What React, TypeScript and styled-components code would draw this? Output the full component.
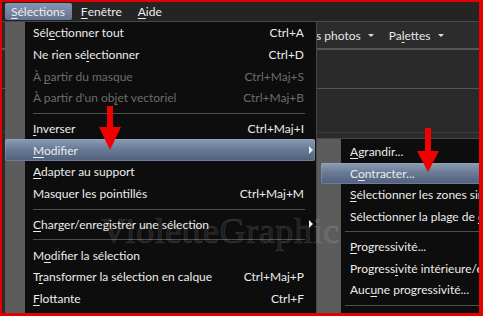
import React from 'react';
import styled, { createGlobalStyle } from 'styled-components';

const Global = createGlobalStyle`
  html, body { margin: 0; padding: 0; background: #000; }
  body { font-family: Lato, "Noto Sans", sans-serif; }
`;

const Frame = styled.div`
  position: relative;
  width: 483px;
  height: 316px;
  box-sizing: border-box;
  border-style: solid;
  border-color: #e40000;
  border-width: 2px 4px 3px 2px;
  overflow: hidden;
  background: #2b2b2b;
  display: flex;
  flex-direction: column;
  font-family: Lato, "Noto Sans", sans-serif;
  font-size: 12px;
  color: #ececec;
`;

const MenuBar = styled.div`
  height: 19px;
  flex-shrink: 0;
  background: #242424;
  display: flex;
  align-items: stretch;
  gap: 3px;
  padding-left: 3px;
`;

const MenuTitle = styled.div<{ $active?: boolean }>`
  display: flex;
  align-items: center;
  margin: 1px 0;
  padding: 0 7px 0 6px;
  border-radius: 2px;
  color: #ededed;
  background: ${(p) => (p.$active ? 'linear-gradient(#8796b0, #63738e)' : 'transparent')};
`;

const Toolbar = styled.div`
  height: 26px;
  flex-shrink: 0;
  background: #2c2c2c;
  border-top: 1px solid #4b4b4b;
  border-bottom: 2px solid #565656;
  display: flex;
  align-items: center;
  gap: 15px;
  padding-left: 314px;
  color: #e6e6e6;
`;

const ToolItem = styled.div`
  display: flex;
  align-items: center;
  gap: 7px;
`;

const Caret = styled.span`
  width: 0;
  height: 0;
  border-left: 3px solid transparent;
  border-right: 3px solid transparent;
  border-top: 3px solid #d8d8d8;
  margin-top: 1px;
`;

const Panel = styled.div<{ $h: number; $line: string }>`
  height: ${(p) => p.$h}px;
  flex-shrink: 0;
  background: #2a2a2a;
  border-bottom: 1px solid ${(p) => p.$line};
`;

const Rest = styled.div`
  flex: 1;
  background: #2b2b2b;
`;

const Menu = styled.div<{ $left: number; $top: number; $width: number; $strip: number; $padTop: number }>`
  position: absolute;
  left: ${(p) => p.$left}px;
  top: ${(p) => p.$top}px;
  width: ${(p) => p.$width}px;
  box-sizing: border-box;
  padding-top: ${(p) => p.$padTop}px;
  padding-bottom: 4px;
  border: 1px solid #474747;
  border-left: none;
  background: linear-gradient(
    to right,
    #5c5c5c 0,
    #5c5c5c ${(p) => p.$strip}px,
    #0d0d0d ${(p) => p.$strip}px
  );
  z-index: 2;
`;

const Item = styled.div<{ $h: number; $pad: number; $inset: number; $active?: boolean; $disabled?: boolean }>`
  height: ${(p) => p.$h}px;
  box-sizing: border-box;
  display: grid;
  grid-template-columns: 1fr auto 11px;
  align-items: center;
  margin: 0 1px 0 ${(p) => p.$inset}px;
  padding-left: ${(p) => p.$pad - p.$inset}px;
  white-space: nowrap;
  color: ${(p) => (p.$disabled ? '#6c6c6c' : '#ececec')};
  border-radius: 2px;
  background: ${(p) =>
    p.$active ? 'linear-gradient(#8e9db5 0%, #6a7b96 45%, #4f607c 100%)' : 'transparent'};
  box-shadow: ${(p) => (p.$active ? 'inset 0 0 0 1px rgba(160,175,200,0.35)' : 'none')};
`;

const Label = styled.span`
  overflow: hidden;
`;

const Shortcut = styled.span`
  text-align: right;
`;

const SubArrow = styled.span`
  justify-self: start;
  margin-left: 5px;
  width: 0;
  height: 0;
  border-top: 4px solid transparent;
  border-bottom: 4px solid transparent;
  border-left: 4px solid #f0f0f0;
`;

const Sep = styled.div<{ $ml: number; $mr: number }>`
  height: 9px;
  display: flex;
  align-items: center;
  margin: 0 ${(p) => p.$mr}px 0 ${(p) => p.$ml}px;
  &::after {
    content: '';
    flex: 1;
    height: 1px;
    background: #4e4e4e;
  }
`;

const U = styled.u`
  text-decoration: underline;
  text-underline-offset: 2px;
  text-decoration-thickness: 1px;
`;

const Watermark = styled.div`
  position: absolute;
  left: 99px;
  top: 208px;
  font-family: "Liberation Serif", serif;
  font-size: 36px;
  letter-spacing: 0.6px;
  color: rgba(200, 200, 200, 0.1);
  -webkit-text-stroke: 0.6px rgba(230, 230, 230, 0.18);
  pointer-events: none;
  z-index: 3;
`;

const ArrowSvg = styled.svg<{ $left: number; $top: number }>`
  position: absolute;
  left: ${(p) => p.$left}px;
  top: ${(p) => p.$top}px;
  z-index: 4;
`;

function Mn({ text }: { text: string }) {
  const i = text.indexOf('&');
  if (i < 0) return <>{text}</>;
  return (
    <>
      {text.slice(0, i)}
      <U>{text[i + 1]}</U>
      {text.slice(i + 2)}
    </>
  );
}

type Entry =
  | { sep: true }
  | { sep?: false; label: string; shortcut?: string; disabled?: boolean; sub?: boolean; active?: boolean };

const mainItems: Entry[] = [
  { label: 'Sél&ectionner tout', shortcut: 'Ctrl+A' },
  { label: 'Ne rien sé&lectionner', shortcut: 'Ctrl+D' },
  { label: 'À &partir du masque', shortcut: 'Ctrl+Maj+S', disabled: true },
  { label: "À partir d'un ob&jet vectoriel", shortcut: 'Ctrl+Maj+B', disabled: true },
  { sep: true },
  { label: '&Inverser', shortcut: 'Ctrl+Maj+I' },
  { label: '&Modifier', sub: true, active: true },
  { label: '&Adapter au support' },
  { label: 'Masquer les pointillés', shortcut: 'Ctrl+Maj+M' },
  { sep: true },
  { label: '&Charger/enregistrer une sélection', sub: true },
  { sep: true },
  { label: 'M&odifier la sélection' },
  { label: 'T&ransformer la sélection en calque', shortcut: 'Ctrl+Maj+P' },
  { label: '&Flottante', shortcut: 'Ctrl+F' },
];

const subItems: Entry[] = [
  { label: '&Agrandir...' },
  { label: 'C&ontracter...', active: true },
  { label: '&Sélectionner les zones similaires...' },
  { label: 'Sélectionner la plage de &couleurs...' },
  { sep: true },
  { label: '&Progressivité...' },
  { label: 'Progress&ivité intérieure/extérieure...' },
  { label: 'Auc&une progressivité...' },
  { sep: true },
];

function MenuList({
  items,
  h,
  pad,
  inset,
  sepL,
  sepR,
}: {
  items: Entry[];
  h: number;
  pad: number;
  inset: number;
  sepL: number;
  sepR: number;
}) {
  return (
    <>
      {items.map((it, i) =>
        it.sep ? (
          <Sep key={i} $ml={sepL} $mr={sepR} />
        ) : (
          <Item key={i} $h={h} $pad={pad} $inset={inset} $active={it.active} $disabled={it.disabled}>
            <Label>
              <Mn text={it.label} />
            </Label>
            <Shortcut>{it.shortcut ?? ''}</Shortcut>
            {it.sub ? <SubArrow /> : <span />}
          </Item>
        )
      )}
    </>
  );
}

function RedArrow({ left, top, shaft, head }: { left: number; top: number; shaft: number; head: number }) {
  const w = 24;
  const c = w / 2;
  return (
    <ArrowSvg $left={left} $top={top} width={w} height={shaft + head} viewBox={`0 0 ${w} ${shaft + head}`}>
      <path
        d={`M${c - 3} 0 H${c + 3} V${shaft} H${w - 1} L${c} ${shaft + head} L1 ${shaft} H${c - 3} Z`}
        fill="#f10000"
      />
    </ArrowSvg>
  );
}

export default function App() {
  return (
    <>
      <Global />
      <Frame>
        <MenuBar>
          <MenuTitle $active>
            <Mn text="&Sélections" />
          </MenuTitle>
          <MenuTitle>
            <Mn text="&Fenêtre" />
          </MenuTitle>
          <MenuTitle>
            <Mn text="&Aide" />
          </MenuTitle>
        </MenuBar>
        <Toolbar>
          <ToolItem>
            s photos <Caret />
          </ToolItem>
          <ToolItem>
            <span>
              <Mn text="Pa&lettes" />
            </span>
            <Caret />
          </ToolItem>
        </Toolbar>
        <Panel $h={38} $line="#545454" />
        <Panel $h={43} $line="#3d3d3d" />
        <Rest />

        <Menu $left={3} $top={19} $width={312} $strip={20} $padTop={0}>
          <MenuList items={mainItems} h={21.7} pad={28} inset={0} sepL={28} sepR={11} />
        </Menu>

        <Menu $left={315} $top={136} $width={240} $strip={24} $padTop={2}>
          <MenuList items={subItems} h={21.5} pad={33} inset={4} sepL={28} sepR={0} />
        </Menu>

        <Watermark>VioletteGraphic</Watermark>

        <RedArrow left={96} top={104} shaft={21} head={23} />
        <RedArrow left={414} top={126} shaft={23} head={21} />
      </Frame>
    </>
  );
}
